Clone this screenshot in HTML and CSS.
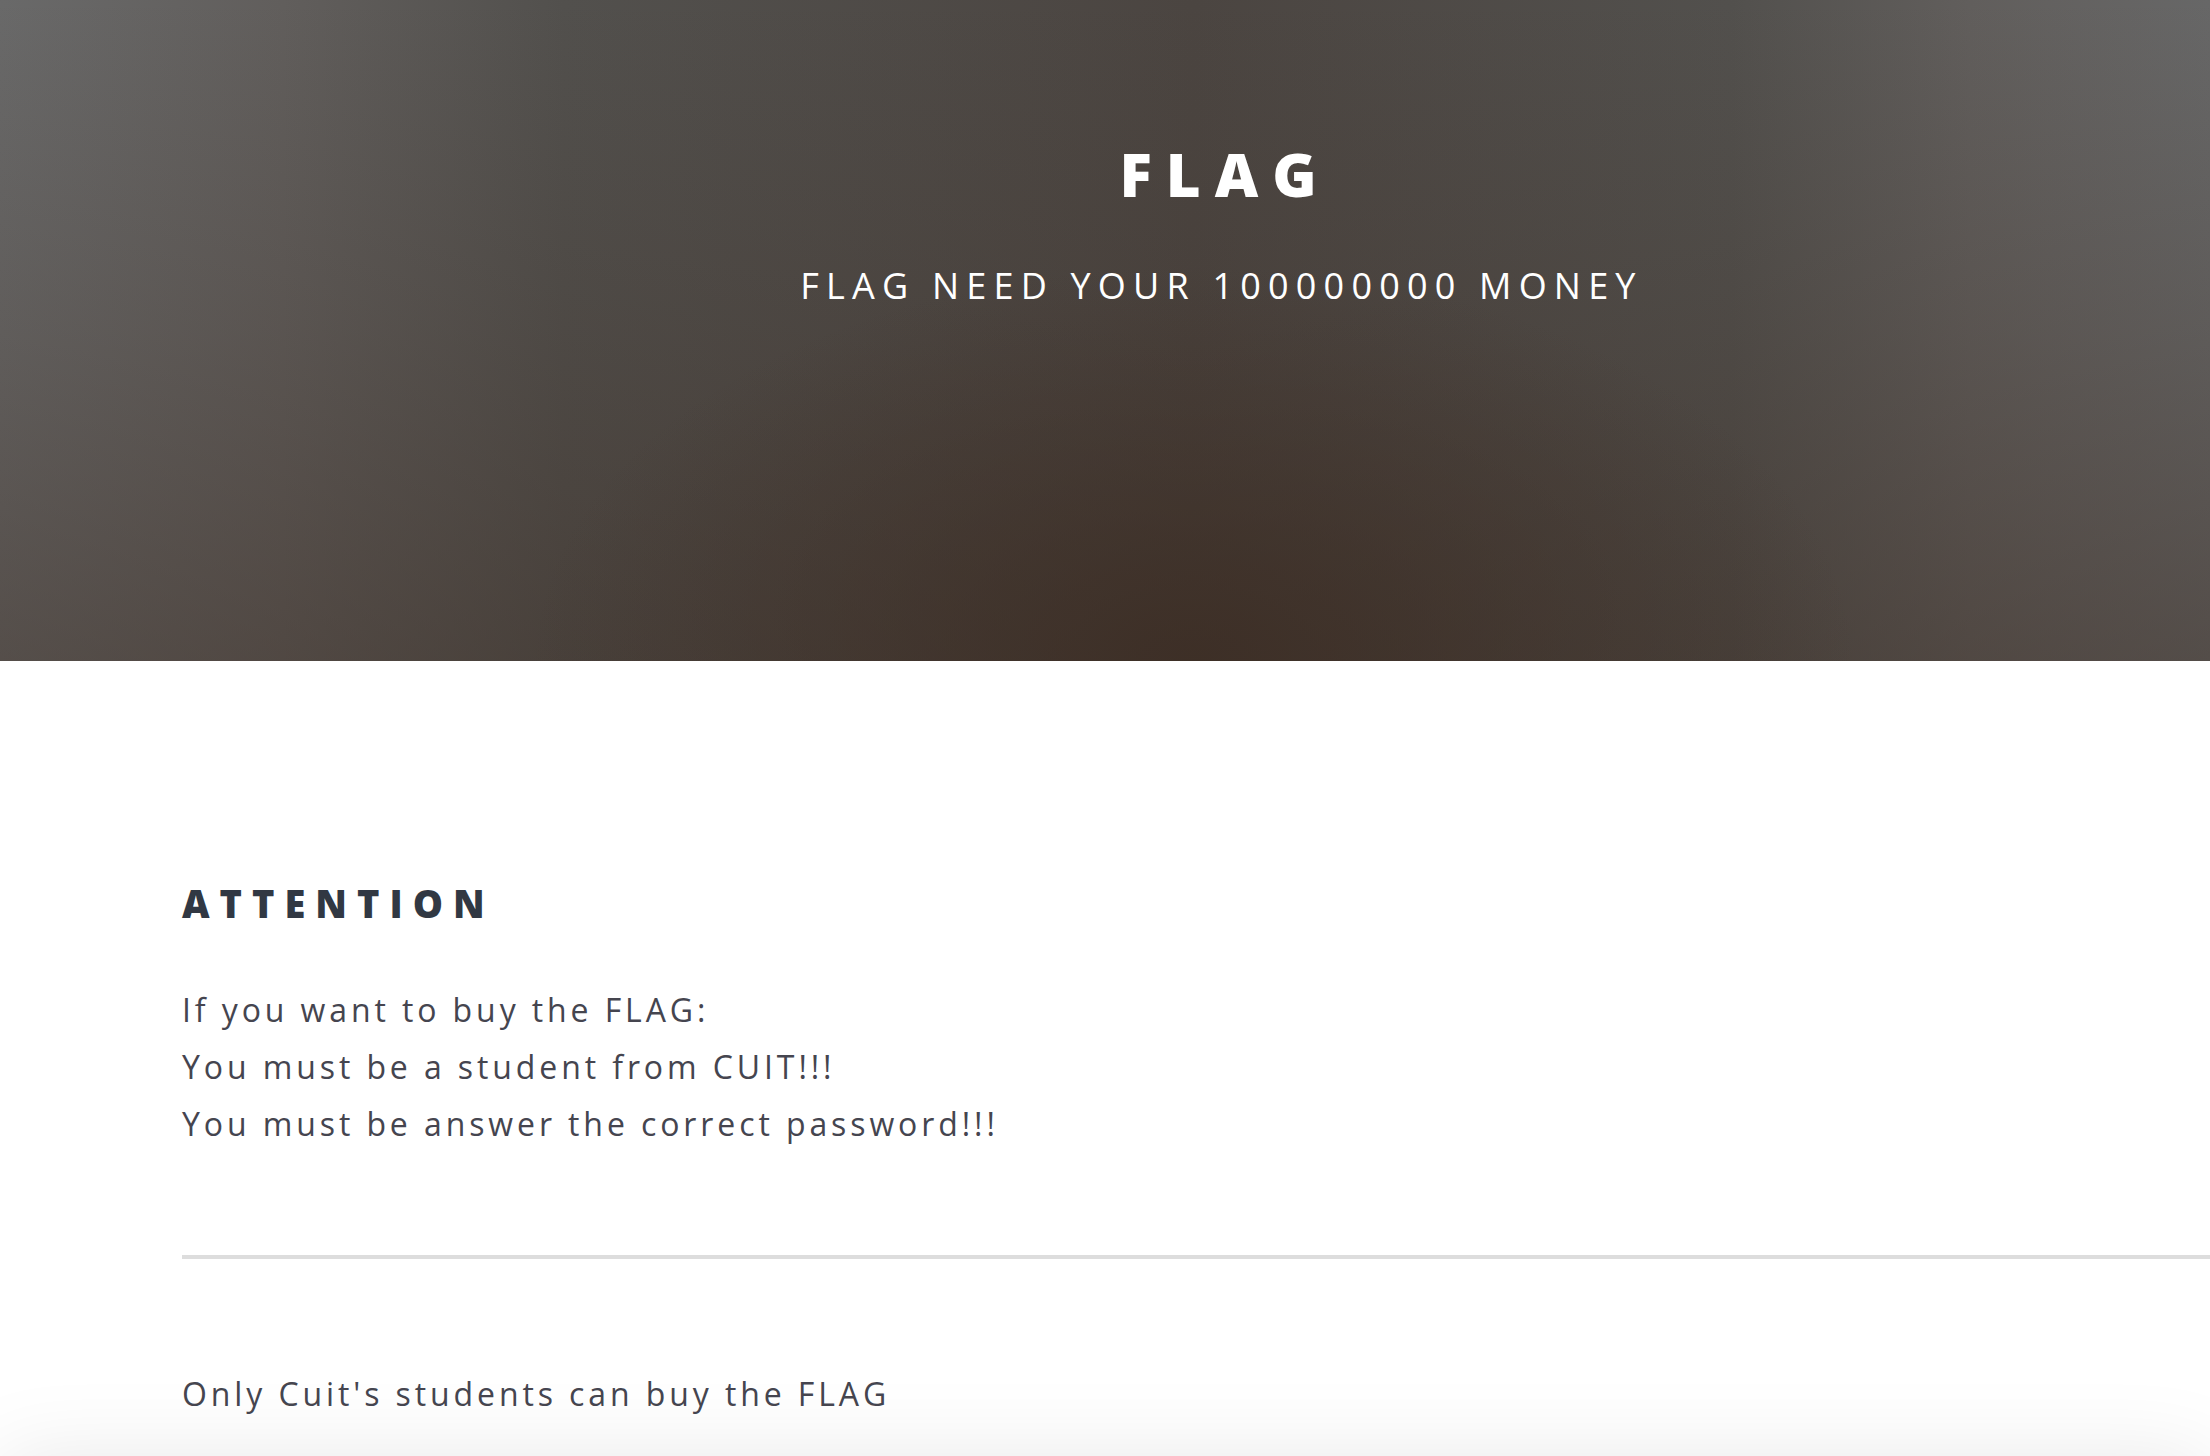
FILE: index.html
```html
<!DOCTYPE html>
<html>
<head>
<meta charset="utf-8">
<title>FLAG</title>
<link rel="stylesheet" href="styles.css">
</head>
<body>
<header class="hero">
  <div class="hero-inner">
    <h1 class="hero-title">FLAG</h1>
    <p class="hero-sub">FLAG NEED YOUR 100000000 MONEY</p>
  </div>
</header>
<main class="content">
  <h2 class="section-title">ATTENTION</h2>
  <p class="notice">If you want to buy the FLAG:<br>You must be a student from CUIT!!!<br>You must be answer the correct password!!!</p>
  <hr class="divider">
  <p class="notice last">Only Cuit's students can buy the FLAG</p>
</main>
<footer class="footer"></footer>
</body>
</html>
```

FILE: styles.css
```css
html, body {
  margin: 0;
  padding: 0;
  background: #ffffff;
  overflow-x: hidden;
}
body {
  font-family: "Open Sans", "Noto Sans", sans-serif;
}
.hero {
  height: 661px;
  box-sizing: border-box;
  padding-top: 141px;
  background:
    radial-gradient(ellipse 30% 60% at 54% 100%, rgba(60, 45, 36, 0.85) 0%, rgba(60, 45, 36, 0.4) 50%, rgba(60, 45, 36, 0) 100%),
    linear-gradient(to bottom, rgba(60, 45, 36, 0) 0%, rgba(60, 45, 36, 0.2) 50%, rgba(60, 45, 36, 0.45) 100%),
    linear-gradient(to right, #696969 0%, #615e5c 12.8%, #52504d 25.5%, #4b4541 54%, #52504d 78.3%, #615e5c 89.1%, #676767 100%);
}
.hero-inner {
  padding-left: 226px;
  text-align: center;
  color: #ffffff;
}
.hero-title {
  margin: 0;
  font-size: 60px;
  line-height: 66px;
  font-weight: 800;
  letter-spacing: 14px;
  text-indent: 14px;
}
.hero-sub {
  margin: 59px 0 0;
  font-size: 36px;
  line-height: 40px;
  font-weight: 400;
  letter-spacing: 7.2px;
  text-indent: 7px;
}
.content {
  padding: 220px 0 0 182px;
}
.section-title {
  margin: 0;
  font-size: 38px;
  line-height: 44px;
  font-weight: 800;
  letter-spacing: 10px;
  color: #313843;
}
.notice {
  margin: 56px 0 0;
  font-size: 32px;
  line-height: 57px;
  letter-spacing: 3.9px;
  color: #45454f;
}
.divider {
  margin: 103px 0 0;
  border: 0;
  height: 4px;
  background: #dddddd;
}
.notice.last {
  margin-top: 106px;
}
.footer {
  height: 200px;
  margin-top: 40px;
  box-shadow: 0 0 90px rgba(0, 0, 0, 0.1);
  background: #ffffff;
}
```
